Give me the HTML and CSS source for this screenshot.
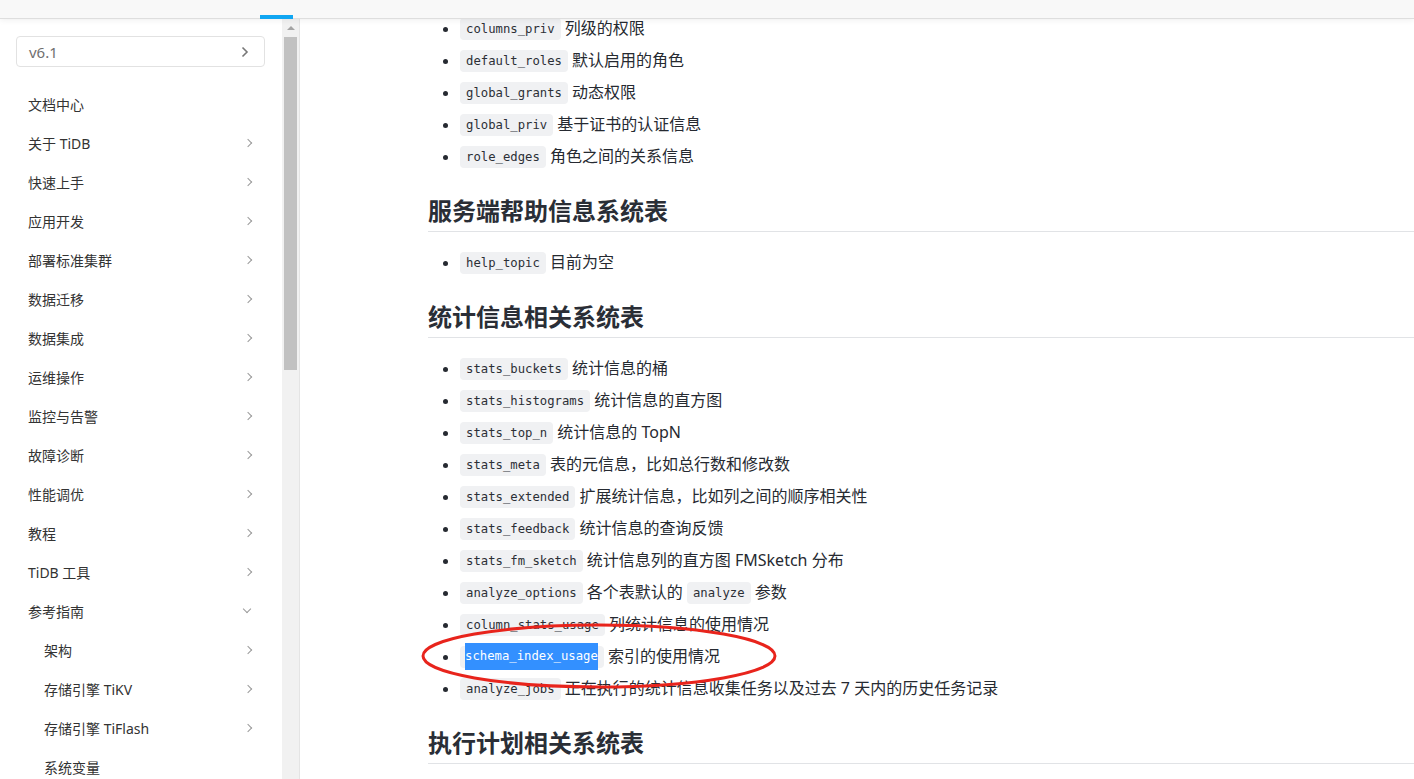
FILE: index.html
```html
<!DOCTYPE html>
<html lang="zh-CN">
<head>
<meta charset="utf-8">
<title>TiDB 文档</title>
<link rel="stylesheet" href="styles.css">
</head>
<body>
<header class="topbar"><span class="tab-indicator"></span></header>
<div class="page">
  <aside class="sidebar">
    <nav class="nav">
      <div class="version">
        <span>v6.1</span>
        <svg class="ver-chev" width="8" height="12" viewBox="0 0 8 12"><path d="M1.5 1.5 L6 6 L1.5 10.5" fill="none" stroke="#777" stroke-width="1.6"/></svg>
      </div>
      <ul class="menu">
        <li class="item"><span>文档中心</span></li>
        <li class="item"><span>关于 TiDB</span><i class="chev"></i></li>
        <li class="item"><span>快速上手</span><i class="chev"></i></li>
        <li class="item"><span>应用开发</span><i class="chev"></i></li>
        <li class="item"><span>部署标准集群</span><i class="chev"></i></li>
        <li class="item"><span>数据迁移</span><i class="chev"></i></li>
        <li class="item"><span>数据集成</span><i class="chev"></i></li>
        <li class="item"><span>运维操作</span><i class="chev"></i></li>
        <li class="item"><span>监控与告警</span><i class="chev"></i></li>
        <li class="item"><span>故障诊断</span><i class="chev"></i></li>
        <li class="item"><span>性能调优</span><i class="chev"></i></li>
        <li class="item"><span>教程</span><i class="chev"></i></li>
        <li class="item"><span>TiDB 工具</span><i class="chev"></i></li>
        <li class="item"><span>参考指南</span><i class="chev down"></i></li>
        <li class="item sub"><span>架构</span><i class="chev"></i></li>
        <li class="item sub"><span>存储引擎 TiKV</span><i class="chev"></i></li>
        <li class="item sub"><span>存储引擎 TiFlash</span><i class="chev"></i></li>
        <li class="item sub"><span>系统变量</span></li>
      </ul>
    </nav>
    <div class="scrolltrack">
      <div class="scroll-up"></div>
      <div class="scroll-thumb"></div>
    </div>
  </aside>
  <main class="main">
    <ul class="list first">
      <li><code>columns_priv</code> 列级的权限</li>
      <li><code>default_roles</code> 默认启用的角色</li>
      <li><code>global_grants</code> 动态权限</li>
      <li><code>global_priv</code> 基于证书的认证信息</li>
      <li><code>role_edges</code> 角色之间的关系信息</li>
    </ul>
    <h2>服务端帮助信息系统表</h2>
    <ul class="list">
      <li><code>help_topic</code> 目前为空</li>
    </ul>
    <h2>统计信息相关系统表</h2>
    <ul class="list">
      <li><code>stats_buckets</code> 统计信息的桶</li>
      <li><code>stats_histograms</code> 统计信息的直方图</li>
      <li><code>stats_top_n</code> 统计信息的 TopN</li>
      <li><code>stats_meta</code> 表的元信息，比如总行数和修改数</li>
      <li><code>stats_extended</code> 扩展统计信息，比如列之间的顺序相关性</li>
      <li><code>stats_feedback</code> 统计信息的查询反馈</li>
      <li><code>stats_fm_sketch</code> 统计信息列的直方图 FMSketch 分布</li>
      <li><code>analyze_options</code> 各个表默认的 <code>analyze</code> 参数</li>
      <li><code>column_stats_usage</code> 列统计信息的使用情况</li>
      <li><code class="sel"><span class="hl">schema_index_usage</span></code> 索引的使用情况</li>
      <li><code>analyze_jobs</code> 正在执行的统计信息收集任务以及过去 7 天内的历史任务记录</li>
    </ul>
    <h2>执行计划相关系统表</h2>
    <svg class="annot" width="362" height="70" viewBox="0 0 362 70"><ellipse cx="180" cy="34" rx="176" ry="31" fill="none" stroke="#e8241c" stroke-width="3"/></svg>
  </main>
</div>
</body>
</html>
```
FILE: styles.css
```css
* { box-sizing: border-box; }
html, body { margin: 0; padding: 0; }
body {
  width: 1414px;
  height: 779px;
  overflow: hidden;
  background: #fff;
  font-family: "Noto Sans", "Noto Sans CJK SC", sans-serif;
  color: #2a2e35;
}
.topbar {
  position: fixed;
  top: 0; left: 0; right: 0;
  height: 19px;
  background: #f8f8f8;
  border-bottom: 1px solid #dedede;
  box-shadow: 0 1px 6px rgba(0,0,0,0.07);
  z-index: 10;
  display: flex;
  align-items: flex-end;
  padding-left: 260px;
}
.tab-indicator {
  display: block;
  width: 33px;
  height: 4px;
  margin-bottom: -1px;
  background: #10a6f2;
}
.page {
  display: flex;
  height: 779px;
}
.sidebar {
  flex: 0 0 300px;
  height: 779px;
  padding-top: 19px;
  display: flex;
  overflow: hidden;
}
.nav {
  flex: 0 0 282px;
  overflow: hidden;
}
.version {
  margin: 17px 17px 0 16px;
  height: 31px;
  border: 1px solid #e2e2e2;
  border-radius: 4px;
  display: flex;
  align-items: center;
  justify-content: space-between;
  padding: 0 15px 0 12px;
  font-size: 15px;
  color: #707070;
}
.ver-chev { display: block; }
.menu {
  list-style: none;
  margin: 17px 0 0;
  padding: 0;
}
.item {
  height: 39px;
  display: flex;
  align-items: center;
  justify-content: space-between;
  padding: 0 31px 0 28px;
  font-size: 14px;
  color: #333;
}
.item.sub { padding-left: 44px; }
.chev {
  display: block;
  width: 6px;
  height: 6px;
  border-top: 1px solid #9a9a9a;
  border-right: 1px solid #9a9a9a;
  transform: rotate(45deg);
}
.chev.down {
  transform: rotate(135deg);
  margin-top: -4px;
  margin-right: 1px;
}
.scrolltrack {
  flex: 0 0 18px;
  background: #f1f1f1;
  border-right: 1px solid #e4e4e4;
  display: flex;
  flex-direction: column;
  align-items: center;
}
.scroll-up {
  margin-top: 7px;
  width: 0; height: 0;
  border-left: 4px solid transparent;
  border-right: 4px solid transparent;
  border-bottom: 4px solid #a3a3a3;
}
.scroll-thumb {
  margin-top: 7px;
  width: 13px;
  height: 333px;
  background: #c1c1c1;
}
.main {
  flex: 1;
  position: relative;
  padding: 12px 0 0 128px;
}
.list {
  margin: 0;
  padding: 0 0 0 32px;
  list-style: disc;
}
.list li {
  height: 32px;
  line-height: 32px;
  font-size: 16px;
  color: #262a31;
  white-space: nowrap;
}
.list li::marker { color: #262a31; font-size: 15px; }
h2 + .list { margin-top: 14px; }
code {
  display: inline-block;
  font-family: "DejaVu Sans Mono", monospace;
  font-size: 12.25px;
  line-height: 22px;
  height: 22px;
  padding: 0 6px;
  background: #f0f1f3;
  border-radius: 4px;
  color: #2c2f36;
  vertical-align: 1px;
}
code.sel { padding-left: 5px; }
.hl {
  display: inline-block;
  background: #3390ff;
  color: #fff;
  line-height: 27px;
  height: 27px;
  margin: -3px 0 -2px;
  vertical-align: top;
}
h2 {
  margin: 24px 0 0;
  font-size: 24px;
  line-height: 30px;
  font-weight: 700;
  color: #2a2e36;
  padding-bottom: 5px;
  border-bottom: 1px solid #e1e3e6;
}
.annot {
  position: absolute;
  left: 119px;
  top: 622px;
}
```
